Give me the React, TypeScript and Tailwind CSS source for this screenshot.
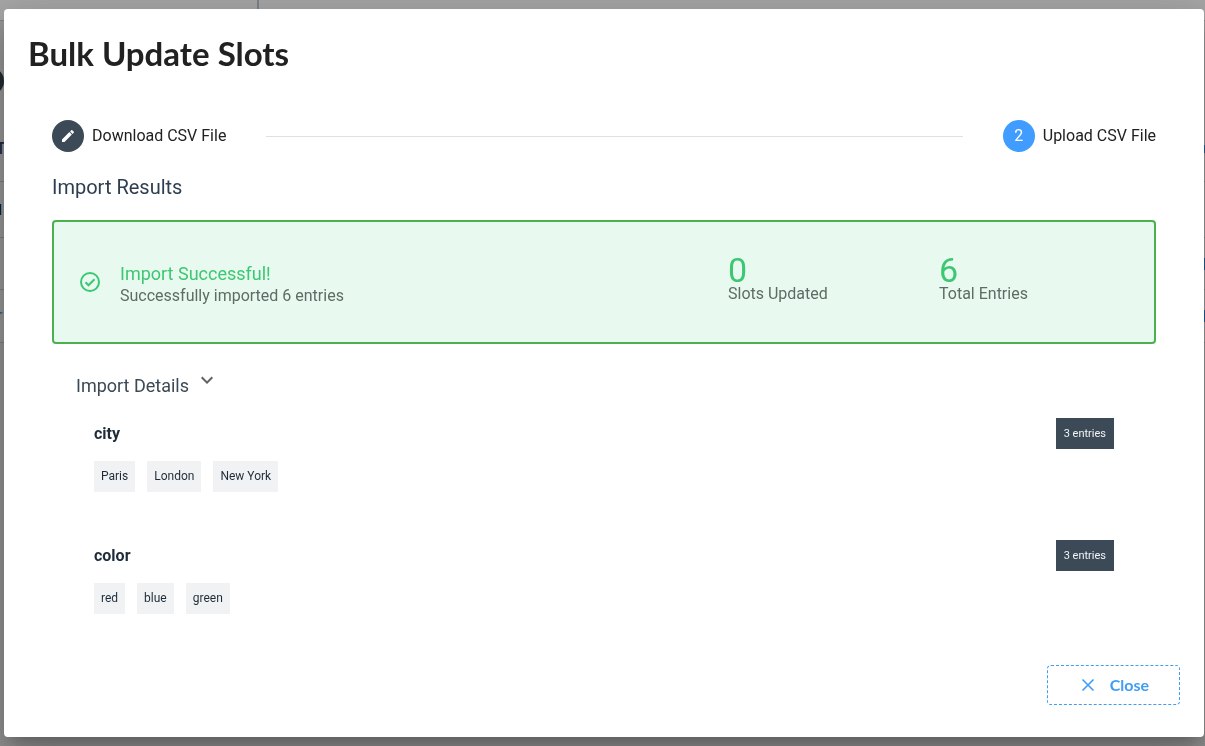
import React from 'react'

type SlotResult = {
  name: string
  values: string[]
}

const slots: SlotResult[] = [
  { name: 'city', values: ['Paris', 'London', 'New York'] },
  { name: 'color', values: ['red', 'blue', 'green'] }
]

function MdiIcon({ path, className }: { path: string; className: string }) {
  return (
    <svg viewBox="0 0 24 24" fill="currentColor" className={className} aria-hidden="true">
      <path d={path} />
    </svg>
  )
}

const mdiPencil =
  'M20.71,7.04C21.1,6.65 21.1,6 20.71,5.63L18.37,3.29C18,2.9 17.35,2.9 16.96,3.29L15.12,5.12L18.87,8.87M3,17.25V21H6.75L17.81,9.93L14.06,6.18L3,17.25Z'
const mdiChevronDown = 'M7.41,8.58L12,13.17L16.59,8.58L18,10L12,16L6,10L7.41,8.58Z'

// The dimmed page that stays under the dialog
function PageBehind() {
  return (
    <div className="fixed inset-0 flex flex-col overflow-hidden bg-[#a6a6a6]" aria-hidden="true">
      <div className="flex h-[21px] shrink-0 border-b border-[#7d868c]">
        <div className="w-[259px] border-r-2 border-[#7b8389]" />
      </div>
      <div className="flex h-[161px] shrink-0 flex-col justify-between border-b border-[#7f7f7f] bg-[#979797] pt-[46px] pb-5">
        <div className="-ml-6 size-7 rounded-full bg-[#232c31]" />
        <div className="flex items-center justify-between">
          <span className="-ml-1 text-base font-medium text-[#1f2a40]">T</span>
          <span className="h-2 w-px bg-[#1f5a94]" />
        </div>
      </div>
      <div className="flex h-14 shrink-0 items-center border-b border-[#7f7f7f] bg-[#979797]">
        <span className="-ml-2 text-sm font-bold text-[#111111]">N</span>
      </div>
      <div className="flex h-[52px] shrink-0 items-center justify-end border-b border-[#7f7f7f] bg-[#979797]">
        <span className="h-3 w-px bg-[#1f5a94]" />
      </div>
      <div className="flex h-[53px] shrink-0 items-center justify-between border-b border-[#7f7f7f] bg-[#979797]">
        <span className="-ml-[3px] text-base text-[#2b5d7c]">r</span>
        <span className="h-3 w-px bg-[#1f5a94]" />
      </div>
      <div className="flex-1 bg-[#929292]" />
    </div>
  )
}

function Stepper() {
  return (
    <ol className="flex items-center px-6 py-6 text-base leading-4 text-[#212121]">
      <li className="flex items-center gap-2">
        <span className="flex size-8 items-center justify-center rounded-full bg-[#3b4a56] text-white">
          <MdiIcon path={mdiPencil} className="size-4" />
        </span>
        Download CSV File
      </li>
      <li role="presentation" className="mx-10 flex-1 border-t border-[#e0e0e0]" />
      <li className="flex items-center gap-2" aria-current="step">
        <span className="flex size-8 items-center justify-center rounded-full bg-[#409cff] text-white">2</span>
        Upload CSV File
      </li>
    </ol>
  )
}

function Stat({ value, label }: { value: number; label: string }) {
  return (
    <div className="w-[211px]">
      <div className="text-[34px] leading-8 text-[#3dc772]">{value}</div>
      <div className="text-base leading-4 text-[#5f6b65]">{label}</div>
    </div>
  )
}

function ResultAlert() {
  return (
    <div role="status" className="flex h-31 items-center rounded-[4px] border-2 border-[#4caf50] bg-[#e8faf0] pr-1 pl-6">
      <svg viewBox="0 0 24 24" className="size-6 text-[#3dc772]" fill="none" stroke="currentColor" strokeWidth="2" aria-hidden="true">
        <circle cx="12" cy="12" r="9" />
        <path d="M7.5 12.3l3 3 6-6" />
      </svg>
      <div className="ml-[18px] flex-1 pt-1">
        <div className="text-lg leading-6 text-[#3dc772]">Import Successful!</div>
        <div className="text-base leading-5 text-[#5f6b65]">Successfully imported 6 entries</div>
      </div>
      <div className="flex pb-2">
        <Stat value={0} label="Slots Updated" />
        <Stat value={6} label="Total Entries" />
      </div>
    </div>
  )
}

function SlotCard({ name, values }: SlotResult) {
  return (
    <section className="flex h-[122px] flex-col gap-3 px-[42px]">
      <div className="flex items-center justify-between">
        <h4 className="text-base font-bold text-[#1f2d3a]">{name}</h4>
        <span className="bg-[#3b4a56] px-2 text-[11px] leading-[31px] text-[#f2f4f7]">{values.length} entries</span>
      </div>
      <ul className="flex gap-3">
        {values.map((value) => (
          <li key={value} className="bg-[#f1f2f4] px-[7px] text-xs leading-[31px] text-[#1f2d3a]">
            {value}
          </li>
        ))}
      </ul>
    </section>
  )
}

export default function App() {
  return (
    <div className="relative min-h-screen font-['Roboto',sans-serif]">
      <PageBehind />
      <div className="relative flex justify-center py-[9px] pr-px pl-1">
        <div
          role="dialog"
          aria-labelledby="dialog-title"
          className="w-full max-w-[1200px] rounded-[4px] bg-white shadow-[0_11px_15px_-7px_rgba(0,0,0,0.2),0_24px_38px_3px_rgba(0,0,0,0.14),0_9px_46px_8px_rgba(0,0,0,0.12)]"
        >
          <h2 id="dialog-title" className="px-6 pt-6 font-['Lato',sans-serif] text-[33px] leading-10 font-bold text-[#212121]">
            Bulk Update Slots
          </h2>
          <div className="px-6 pt-[23px]">
            <Stepper />
            <div className="px-6">
              <h3 className="text-xl leading-[22px] text-[#2c3e50]">Import Results</h3>
              <div className="pt-[22px]">
                <ResultAlert />
              </div>
            </div>
          </div>
          <button type="button" aria-expanded="true" className="mt-6 ml-[72px] flex h-9 items-start gap-[6px] text-lg text-[#3b4a56]">
            <span className="pt-1">Import Details</span>
            <MdiIcon path={mdiChevronDown} className="size-6 text-[#616161]" />
          </button>
          <div className="px-12 pt-[14px]">
            {slots.map((slot) => (
              <SlotCard key={slot.name} {...slot} />
            ))}
          </div>
          <div className="flex justify-end px-6 pt-[3px] pb-8">
            <button
              type="button"
              className="flex h-10 items-center rounded-[4px] border border-dashed border-[#409cf5] px-[30px] font-['Lato',sans-serif] text-base font-bold text-[#409cf5]"
            >
              <svg viewBox="0 0 20 20" className="mr-3 size-5" fill="none" stroke="currentColor" strokeWidth="1.6" aria-hidden="true">
                <path d="M4.5 4.5l11 11M15.5 4.5l-11 11" />
              </svg>
              Close
            </button>
          </div>
        </div>
      </div>
    </div>
  )
}
